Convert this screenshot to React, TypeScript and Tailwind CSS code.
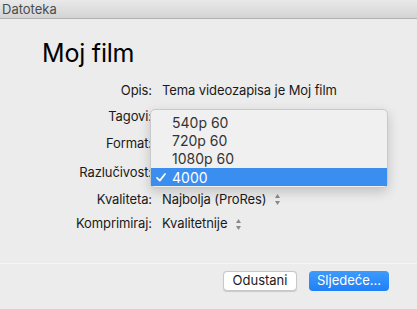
import React from "react";

const font = { fontFamily: "Inter, 'Liberation Sans', sans-serif" };

function Stepper() {
  return (
    <svg width="7" height="13" viewBox="0 0 7 13" className="ml-[8px]">
      <path d="M3.5 1 L6 5 L1 5 Z" fill="#8a8a8a" />
      <path d="M3.5 12 L6 8 L1 8 Z" fill="#8a8a8a" />
    </svg>
  );
}

export default function App() {
  return (
    <div
      className="relative w-[417px] h-[309px] overflow-hidden bg-[#ececec] text-[#1a1a1a]"
      style={font}
    >
      <div className="h-[19px] bg-gradient-to-b from-[#e9e9e9] to-[#d4d4d4] border-b border-[#b3b3b3] pl-[2px] text-[13px] leading-[18px] text-[#4c4c4c]">
        Datoteka
      </div>
      <div className="pl-[42px] pt-[19px] text-[25px] leading-[30px] tracking-[-0.2px] text-black">
        Moj film
      </div>
      <div className="mt-[10px] grid grid-cols-[152px_1fr] text-[13px] tracking-[-0.1px] text-[#1a1a1a]">
        <div className="h-[26px] flex items-center justify-end">Opis:</div>
        <div className="h-[26px] flex items-center pl-[10px]">Tema videozapisa je Moj film</div>
        <div className="h-[26px] flex items-center justify-end">Tagovi:</div>
        <div className="h-[26px]" />
        <div className="h-[28px] flex items-center justify-end">Format:</div>
        <div className="h-[28px]" />
        <div className="h-[30px] flex items-center justify-end">Razlučivost:</div>
        <div className="h-[30px]" />
        <div className="h-[23px] flex items-center justify-end">Kvaliteta:</div>
        <div className="h-[23px] flex items-center pl-[10px]">
          Najbolja (ProRes)
          <Stepper />
        </div>
        <div className="h-[26px] flex items-center justify-end">Komprimiraj:</div>
        <div className="h-[26px] flex items-center pl-[10px]">
          Kvalitetnije
          <Stepper />
        </div>
      </div>
      <div className="mt-[26px] h-px bg-[#f6f6f6]" />
      <div className="flex justify-end gap-[12px] pr-[28px] pt-[7px] text-[13px]">
        <div className="w-[74px] h-[20px] rounded-[4px] bg-white border border-[#c8c8c8] shadow-[0_0.5px_1px_rgba(0,0,0,0.15)] flex items-center justify-center text-[#1a1a1a]">
          Odustani
        </div>
        <div className="w-[80px] h-[20px] rounded-[4px] bg-gradient-to-b from-[#3d9bfd] to-[#1f7ff5] flex items-center justify-center text-white">
          Sljedeće...
        </div>
      </div>

      <div className="absolute left-[150px] top-[109px] w-[238px] h-[79px] rounded-[5px] bg-[#f0f0f0] border border-[#c9c9c9] shadow-[0_4px_12px_rgba(0,0,0,0.18)] pt-[3px] text-[14px] text-[#333]">
        <div className="h-[18px] flex items-center pl-[21px]">540p 60</div>
        <div className="h-[18px] flex items-center pl-[21px]">720p 60</div>
        <div className="h-[18px] flex items-center pl-[21px]">1080p 60</div>
        <div className="h-[18px] mt-[1px] flex items-center bg-[#3a8ef0] text-white">
          <span className="w-[21px] pl-[5px] flex items-center">
            <svg width="10" height="9" viewBox="0 0 10 9">
              <path d="M1 4.8 L3.8 7.6 L9 1" fill="none" stroke="white" strokeWidth="1.7" strokeLinecap="round" strokeLinejoin="round" />
            </svg>
          </span>
          4000
        </div>
      </div>
    </div>
  );
}
